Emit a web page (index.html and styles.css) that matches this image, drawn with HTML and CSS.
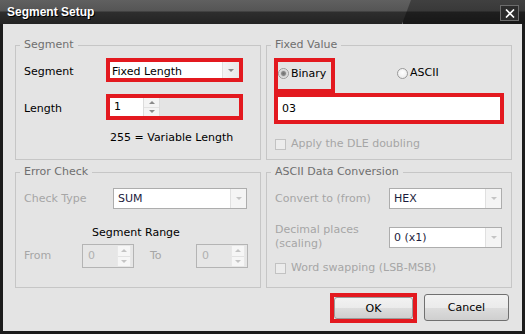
FILE: index.html
```html
<!DOCTYPE html>
<html lang="en">
<head>
    <meta charset="UTF-8">
    <title>Segment Setup</title>
    <link rel="stylesheet" href="styles.css">
</head>
<body>
    <div class="dialog">
        <!-- Title bar -->
        <div class="titlebar">
            <span class="title">Segment Setup</span>
            <div class="close-button">
                <svg width="10" height="9" viewBox="0 0 10 9"><path d="M1 0.5 L9 8.5 M9 0.5 L1 8.5" stroke="#fff" stroke-width="1.6"/></svg>
            </div>
        </div>

        <div class="body">
            <div class="groups">
                <!-- Segment -->
                <div class="group">
                    <span class="legend">Segment</span>
                    <div class="row first-row">
                        <span class="label seg-label">Segment</span>
                        <div class="mark seg-mark">
                            <div class="combo">
                                <span class="combo-text">Fixed Length</span>
                                <span class="combo-arrow"><i class="tri-down"></i></span>
                            </div>
                        </div>
                    </div>
                    <div class="row length-row">
                        <span class="label seg-label">Length</span>
                        <div class="mark length-mark">
                            <div class="spin-input">1</div>
                            <div class="spin-buttons">
                                <span class="spin-half"><i class="tri-up"></i></span>
                                <span class="spin-half"><i class="tri-down"></i></span>
                            </div>
                        </div>
                    </div>
                    <div class="note">255 = Variable Length</div>
                </div>

                <!-- Fixed Value -->
                <div class="group">
                    <span class="legend">Fixed Value</span>
                    <div class="radio-row">
                        <div class="mark binary-mark">
                            <span class="radio checked"></span>
                            <span class="radio-text">Binary</span>
                        </div>
                        <div class="ascii-option">
                            <span class="radio"></span>
                            <span class="radio-text">ASCII</span>
                        </div>
                    </div>
                    <div class="mark value-mark">
                        <div class="value-input">03</div>
                    </div>
                    <div class="check-row dle-row">
                        <span class="checkbox"></span>
                        <span>Apply the DLE doubling</span>
                    </div>
                </div>

                <!-- Error Check -->
                <div class="group disabled">
                    <span class="legend">Error Check</span>
                    <div class="row field-row">
                        <span class="label check-label">Check Type</span>
                        <div class="combo boxed check-combo">
                            <span class="combo-text">SUM</span>
                            <span class="combo-arrow"><i class="tri-down"></i></span>
                        </div>
                    </div>
                    <div class="range-title">Segment Range</div>
                    <div class="row range-row">
                        <span class="label from-label">From</span>
                        <div class="small-spin">
                            <span class="small-spin-text">0</span>
                            <div class="spin-buttons">
                                <span class="spin-half"><i class="tri-up"></i></span>
                                <span class="spin-half"><i class="tri-down"></i></span>
                            </div>
                        </div>
                        <span class="label to-label">To</span>
                        <div class="small-spin">
                            <span class="small-spin-text">0</span>
                            <div class="spin-buttons">
                                <span class="spin-half"><i class="tri-up"></i></span>
                                <span class="spin-half"><i class="tri-down"></i></span>
                            </div>
                        </div>
                    </div>
                </div>

                <!-- ASCII Data Conversion -->
                <div class="group disabled">
                    <span class="legend">ASCII Data Conversion</span>
                    <div class="row field-row">
                        <span class="label conv-label">Convert to (from)</span>
                        <div class="combo boxed conv-combo">
                            <span class="combo-text">HEX</span>
                            <span class="combo-arrow"><i class="tri-down"></i></span>
                        </div>
                    </div>
                    <div class="row decimal-row">
                        <span class="label conv-label">Decimal places<br>(scaling)</span>
                        <div class="combo boxed conv-combo">
                            <span class="combo-text">0 (x1)</span>
                            <span class="combo-arrow"><i class="tri-down"></i></span>
                        </div>
                    </div>
                    <div class="check-row swap-row">
                        <span class="checkbox"></span>
                        <span>Word swapping (LSB-MSB)</span>
                    </div>
                </div>
            </div>

            <div class="buttons">
                <div class="mark ok-mark">
                    <div class="button ok-button">OK</div>
                </div>
                <div class="button cancel-button">Cancel</div>
            </div>
        </div>
    </div>
</body>
</html>
```

FILE: styles.css
```css
body {
    margin: 0;
    background-color: #1c1c1c;
    font-family: "DejaVu Sans", sans-serif;
    font-size: 11px;
    color: #000;
}
.dialog {
    width: 525px;
    height: 334px;
    background-color: #1c1c1c;
}

/* Title bar */
.titlebar {
    position: relative;
    height: 24px;
    display: flex;
    align-items: center;
    justify-content: space-between;
    padding: 0 6px 0 7px;
    box-sizing: border-box;
    background: linear-gradient(to bottom, #606060 0, #555 11px, #2e2e2e 12px, #232323 24px);
    overflow: hidden;
}
.titlebar::after {
    /* darker panel on the right, cut diagonally */
    content: "";
    position: absolute;
    top: 0;
    right: 0;
    width: 122px;
    height: 24px;
    background: rgba(0, 0, 0, 0.33);
    clip-path: polygon(9px 0, 100% 0, 100% 100%, 0 100%);
    border-left: 1px solid #777;
}
.title {
    font-family: "Liberation Sans", sans-serif;
    font-weight: bold;
    font-size: 12px;
    color: #fff;
    text-shadow: 1px 1px 0 #000;
    line-height: 14px;
}
.close-button {
    position: relative;
    z-index: 1;
    width: 19px;
    height: 16px;
    box-sizing: border-box;
    border: 1px solid #6c6c6c;
    background-color: #2c2c2c;
    display: flex;
    align-items: center;
    justify-content: center;
    margin-top: 2px;
}

/* Dialog body */
.body {
    height: 310px;
    box-sizing: border-box;
    border: 3px solid #1c1c1c;
    border-top: 0;
    background-color: #e4e4e4;
    padding: 21px 10px 0 12px;
}
.groups {
    display: grid;
    grid-template-columns: 246px 246px;
    grid-template-rows: 115px 116px;
    column-gap: 5px;
    row-gap: 12px;
}
.group {
    box-sizing: border-box;
    border: 1px solid #c6c6c6;
    padding: 0 8px;
    display: flex;
    flex-direction: column;
}
.legend {
    align-self: flex-start;
    margin: -8px 0 0 -4px;
    padding: 0 4px;
    line-height: 14px;
    background-color: #e4e4e4;
    color: #6f6f6f;
}
.row {
    display: flex;
    align-items: center;
}
.label {
    line-height: 14px;
}
.disabled .label,
.check-row {
    color: #a6a6a6;
}

/* red annotation boxes */
.mark {
    box-sizing: border-box;
    border: 4px solid #e3191f;
}

/* Segment group */
.first-row {
    margin-top: 6px;
}
.seg-label {
    width: 82px;
    padding-top: 3px;
}
.seg-mark {
    width: 137px;
    height: 24px;
}
.combo {
    display: flex;
    height: 100%;
    background-color: #fff;
    overflow: hidden;
}
.combo-text {
    flex: 1;
    padding-left: 2px;
    line-height: 17px;
    padding-top: 1px;
}
.combo-arrow {
    width: 16px;
    background: linear-gradient(to right, #f4f4f4, #e8e8e8);
    border-left: 1px solid #e0e0e0;
    display: flex;
    align-items: center;
    justify-content: center;
}
.tri-down {
    width: 0;
    height: 0;
    border-left: 3px solid transparent;
    border-right: 3px solid transparent;
    border-top: 3px solid #8a8a8a;
}
.tri-up {
    width: 0;
    height: 0;
    border-left: 3px solid transparent;
    border-right: 3px solid transparent;
    border-bottom: 3px solid #8a8a8a;
}
.length-row {
    margin-top: 12px;
}
.length-mark {
    width: 137px;
    height: 26px;
    display: flex;
}
.spin-input {
    width: 33px;
    background-color: #fff;
    padding-left: 4px;
    box-sizing: border-box;
    line-height: 18px;
}
.spin-buttons {
    width: 17px;
    display: flex;
    flex-direction: column;
    background-color: #f4f4f4;
    border-left: 1px solid #dcdcdc;
    border-right: 1px solid #dcdcdc;
    box-sizing: border-box;
}
.spin-half {
    flex: 1;
    display: flex;
    align-items: center;
    justify-content: center;
}
.spin-half + .spin-half {
    border-top: 1px solid #e2e2e2;
}
.note {
    margin-top: 11px;
    padding-left: 86px;
    line-height: 14px;
}

/* Fixed Value group */
.radio-row {
    display: flex;
    align-items: flex-start;
    margin-top: 6px;
}
.binary-mark {
    width: 61px;
    height: 35px;
    margin-left: -1px;
    display: flex;
    align-items: center;
    padding-bottom: 4px;
}
.radio {
    width: 11px;
    height: 11px;
    box-sizing: border-box;
    border-radius: 50%;
    border: 1px solid #9a9a9a;
    background: radial-gradient(circle at 50% 40%, #fff 0, #e6e6e6 100%);
    display: inline-block;
}
.radio.checked {
    background: radial-gradient(circle, #6e6e6e 0, #8a8a8a 2px, #cfcfcf 3px, #f2f2f2 5px);
}
.radio-text {
    margin-left: 2px;
    line-height: 14px;
}
.ascii-option {
    margin-left: 62px;
    margin-top: 8px;
    display: flex;
    align-items: center;
}
.value-mark {
    width: 230px;
    height: 31px;
    margin-left: -1px;
}
.value-input {
    height: 100%;
    background-color: #fff;
    padding-left: 4px;
    line-height: 23px;
}
.check-row {
    display: flex;
    align-items: center;
    line-height: 14px;
}
.checkbox {
    width: 11px;
    height: 11px;
    box-sizing: border-box;
    border: 1px solid #c2c2c2;
    background-color: #ececec;
    margin-right: 5px;
}
.dle-row {
    margin-top: 13px;
}

/* Error Check group */
.field-row {
    margin-top: 9px;
}
.check-label {
    width: 89px;
}
.boxed {
    box-sizing: border-box;
    height: 21px;
    border: 1px solid #adadad;
}
.boxed .combo-text {
    padding-left: 4px;
    padding-top: 0;
    line-height: 19px;
    color: #1c1c3c;
}
.boxed .combo-arrow {
    width: 15px;
    background: #f4f4f4;
}
.boxed .tri-down {
    border-top-color: #c4c4c4;
}
.check-combo {
    width: 134px;
}
.range-title {
    margin-top: 17px;
    padding-left: 68px;
    line-height: 14px;
}
.range-row {
    margin-top: 4px;
}
.from-label {
    width: 58px;
}
.to-label {
    margin-left: 16px;
    width: 46px;
}
.small-spin {
    width: 52px;
    height: 24px;
    box-sizing: border-box;
    border: 1px solid #b4b4b4;
    background-color: #e6e6e6;
    display: flex;
    padding: 1px 2px 1px 0;
}
.small-spin-text {
    flex: 1;
    padding-left: 5px;
    line-height: 20px;
    color: #b0b0b0;
}
.small-spin .spin-buttons {
    width: 14px;
    background-color: #f6f6f6;
    border-color: #e8e8e8;
}
.small-spin .tri-up {
    border-bottom-color: #c4c4c4;
}
.small-spin .tri-down {
    border-top-color: #c4c4c4;
}

/* ASCII Data Conversion group */
.conv-label {
    width: 114px;
}
.conv-combo {
    width: 113px;
}
.decimal-row {
    margin-top: 14px;
}
.swap-row {
    margin-top: 10px;
}

/* Buttons */
.buttons {
    display: flex;
    justify-content: flex-end;
    align-items: flex-start;
    margin-top: 5px;
    padding-right: 3px;
}
.button {
    box-sizing: border-box;
    display: flex;
    align-items: center;
    justify-content: center;
    border: 1px solid #707070;
    border-radius: 3px;
    background: linear-gradient(to bottom, #f2f2f2 0, #ebebeb 50%, #dddddd 50%, #cfcfcf 100%);
}
.ok-mark {
    width: 87px;
    height: 30px;
}
.ok-button {
    height: 100%;
    border-color: #9a9a9a;
}
.cancel-button {
    width: 85px;
    height: 27px;
    margin-top: 1px;
    margin-left: 7px;
}
```
